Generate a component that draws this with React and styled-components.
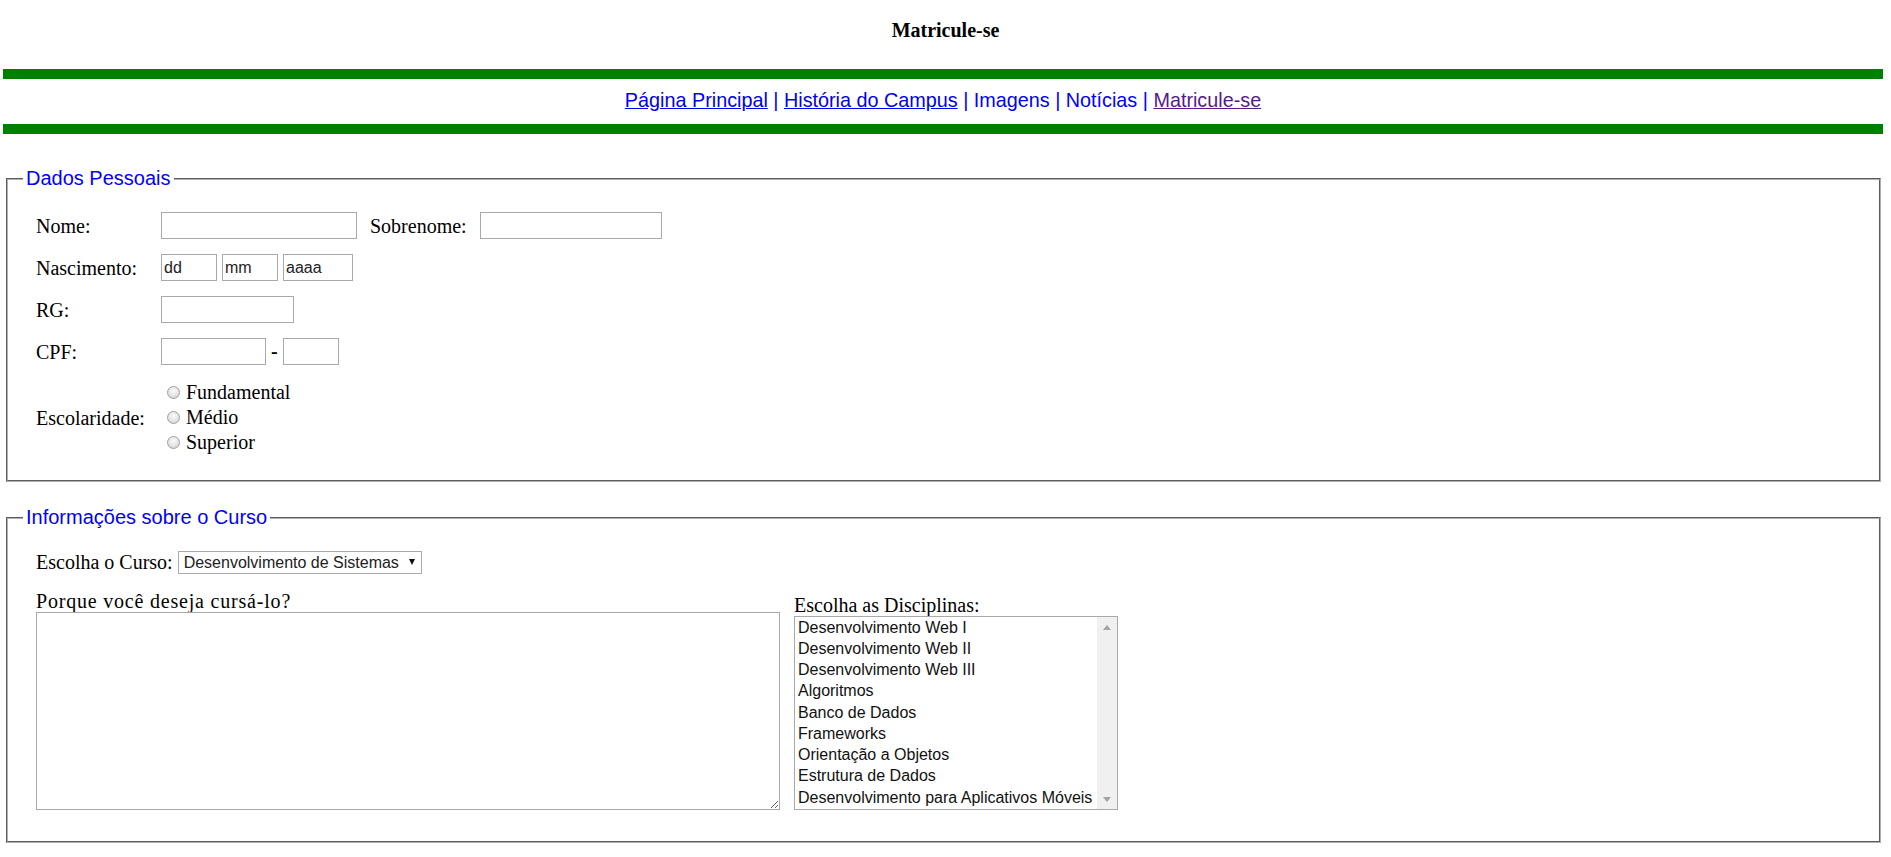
import React from 'react';
import styled, { createGlobalStyle } from 'styled-components';

const GlobalStyle = createGlobalStyle`
  html, body { margin: 0; padding: 0; background: #ffffff; }
  body {
    font-family: "Liberation Serif", "Times New Roman", serif;
    font-size: 20px;
    color: #000000;
  }
`;

const sans = `"Liberation Sans", Arial, sans-serif`;

const Page = styled.div`
  width: 1891px;
  min-height: 857px;
  padding-top: 19px;
  box-sizing: border-box;
`;

const Title = styled.h1`
  margin: 0 0 27px;
  font-size: 20px;
  line-height: 23px;
  font-weight: bold;
  text-align: center;
`;

const Header = styled.header`
  margin: 0 8px 0 3px;
`;

const Bar = styled.div`
  height: 10px;
  background: #008000;
`;

const Nav = styled.nav`
  height: 45px;
  line-height: 42px;
  text-align: center;
  font-family: ${sans};
  font-size: 19.8px;
  color: #0000ff;
`;

const NavLink = styled.a`
  color: ${(p) => (p.$visited ? '#551a8b' : '#0000ee')};
  text-decoration: underline;
`;

const Fieldset = styled.fieldset`
  margin: ${(p) => p.$top}px 10px 0 6px;
  padding: 0 0 0 15px;
  border: 2px groove #b0b0b0;
  min-width: 0;
`;

const Legend = styled.legend`
  padding: 0 3px;
  font-family: ${sans};
  font-size: 20px;
  line-height: 23px;
  color: #0000ff;
`;

const FormGrid = styled.div`
  display: grid;
  grid-template-columns: 125px auto;
  row-gap: 15px;
  align-items: center;
  justify-items: start;
  padding: 22px 0 24.5px 13px;
`;

const Label = styled.label`
  font-size: 20px;
  line-height: 22px;
  white-space: nowrap;
  letter-spacing: ${(p) => p.$spacing || 0}px;
`;

const Inline = styled.div`
  display: flex;
  align-items: center;
  gap: ${(p) => p.$gap || 5}px;
`;

const TextInput = styled.input`
  box-sizing: border-box;
  width: ${(p) => p.$w}px;
  height: 27px;
  margin: 0;
  padding: 0 2px;
  border: 1px solid #a9a9a9;
  background: #ffffff;
  font-family: ${sans};
  font-size: 16px;
  color: #222222;
  outline: none;
`;

const Dash = styled.span`
  font-size: 20px;
  font-weight: bold;
`;

const RadioGroup = styled.div`
  display: flex;
  flex-direction: column;
`;

const RadioLine = styled.label`
  display: flex;
  align-items: center;
  height: 25px;
  font-size: 20px;
`;

const Radio = styled.input.attrs({ type: 'radio' })`
  appearance: none;
  -webkit-appearance: none;
  box-sizing: border-box;
  width: 13px;
  height: 13px;
  margin: 0 6px 0 6px;
  border: 1px solid #a0a0a0;
  border-radius: 50%;
  background: radial-gradient(circle at 50% 35%, #fbfbfb 0%, #e4e4e4 55%, #cbcbcb 100%);
`;

const CourseBody = styled.div`
  padding: 21.5px 0 31px 13px;
  display: flex;
  flex-direction: column;
  gap: 16px;
`;

const CourseRow = styled.div`
  display: flex;
  align-items: center;
  gap: 5px;
  height: 23px;
`;

const SelectWrap = styled.span`
  position: relative;
  display: inline-block;
  &::after {
    content: '';
    position: absolute;
    right: 7px;
    top: 9px;
    border-left: 3.5px solid transparent;
    border-right: 3.5px solid transparent;
    border-top: 6px solid #111111;
    pointer-events: none;
  }
`;

const Select = styled.select`
  appearance: none;
  -webkit-appearance: none;
  box-sizing: border-box;
  width: 244px;
  height: 23px;
  margin: 0;
  padding: 0 18px 0 5px;
  border: 1px solid #a9a9a9;
  border-radius: 0;
  background: #ffffff;
  font-family: ${sans};
  font-size: 16px;
  color: #222222;
`;

const Columns = styled.div`
  display: flex;
  align-items: flex-end;
  gap: 14px;
`;

const Column = styled.div`
  display: flex;
  flex-direction: column;
`;

const TextArea = styled.textarea`
  display: block;
  box-sizing: border-box;
  width: 744px;
  height: 198px;
  margin: 0;
  padding: 2px;
  border: 1px solid #a9a9a9;
  font-family: ${sans};
  font-size: 16px;
`;

const ListBox = styled.div`
  box-sizing: border-box;
  width: 324px;
  height: 194px;
  border: 1px solid #a9a9a9;
  display: flex;
  overflow: hidden;
  background: #ffffff;
`;

const Options = styled.ul`
  flex: 1;
  margin: 0;
  padding: 0;
  list-style: none;
  font-family: ${sans};
  font-size: 16px;
  color: #111111;
`;

const Option = styled.li`
  height: 21.25px;
  line-height: 21px;
  padding-left: 3px;
  white-space: nowrap;
`;

const Scrollbar = styled.div`
  width: 20px;
  background: #f0f0f0;
  display: flex;
  flex-direction: column;
  justify-content: space-between;
  align-items: center;
  padding: 8px 0 7px;
  box-sizing: border-box;
`;

const Arrow = styled.span`
  width: 0;
  height: 0;
  border-left: 4px solid transparent;
  border-right: 4px solid transparent;
  ${(p) => (p.$down ? 'border-top: 5px solid #a3a3a3;' : 'border-bottom: 5px solid #a3a3a3;')}
`;

const disciplinas = [
  'Desenvolvimento Web I',
  'Desenvolvimento Web II',
  'Desenvolvimento Web III',
  'Algoritmos',
  'Banco de Dados',
  'Frameworks',
  'Orientação a Objetos',
  'Estrutura de Dados',
  'Desenvolvimento para Aplicativos Móveis',
];

export default function App() {
  return (
    <Page>
      <GlobalStyle />
      <Title>Matricule-se</Title>
      <Header>
        <Bar />
        <Nav>
          <NavLink href="#">Página Principal</NavLink> |{' '}
          <NavLink href="#">História do Campus</NavLink> | Imagens | Notícias |{' '}
          <NavLink href="#" $visited>Matricule-se</NavLink>
        </Nav>
        <Bar />
      </Header>

      <Fieldset $top={33}>
        <Legend>Dados Pessoais</Legend>
        <FormGrid>
          <Label>Nome:</Label>
          <Inline $gap={13}>
            <TextInput $w={196} />
            <Label>Sobrenome:</Label>
            <TextInput $w={182} />
          </Inline>

          <Label>Nascimento:</Label>
          <Inline>
            <TextInput $w={56} defaultValue="dd" />
            <TextInput $w={56} defaultValue="mm" />
            <TextInput $w={70} defaultValue="aaaa" />
          </Inline>

          <Label>RG:</Label>
          <TextInput $w={133} />

          <Label>CPF:</Label>
          <Inline>
            <TextInput $w={105} />
            <Dash>-</Dash>
            <TextInput $w={56} />
          </Inline>

          <Label>Escolaridade:</Label>
          <RadioGroup>
            <RadioLine><Radio name="esc" />Fundamental</RadioLine>
            <RadioLine><Radio name="esc" />Médio</RadioLine>
            <RadioLine><Radio name="esc" />Superior</RadioLine>
          </RadioGroup>
        </FormGrid>
      </Fieldset>

      <Fieldset $top={24.5}>
        <Legend>Informações sobre o Curso</Legend>
        <CourseBody>
          <CourseRow>
            <Label>Escolha o Curso:</Label>
            <SelectWrap>
              <Select defaultValue="ds">
                <option value="ds">Desenvolvimento de Sistemas</option>
              </Select>
            </SelectWrap>
          </CourseRow>
          <Columns>
            <Column>
              <Label $spacing={0.8}>Porque você deseja cursá-lo?</Label>
              <TextArea />
            </Column>
            <Column>
              <Label>Escolha as Disciplinas:</Label>
              <ListBox role="listbox" aria-multiselectable="true">
                <Options>
                  {disciplinas.map((d) => (
                    <Option key={d} role="option">{d}</Option>
                  ))}
                </Options>
                <Scrollbar>
                  <Arrow />
                  <Arrow $down />
                </Scrollbar>
              </ListBox>
            </Column>
          </Columns>
        </CourseBody>
      </Fieldset>
    </Page>
  );
}
